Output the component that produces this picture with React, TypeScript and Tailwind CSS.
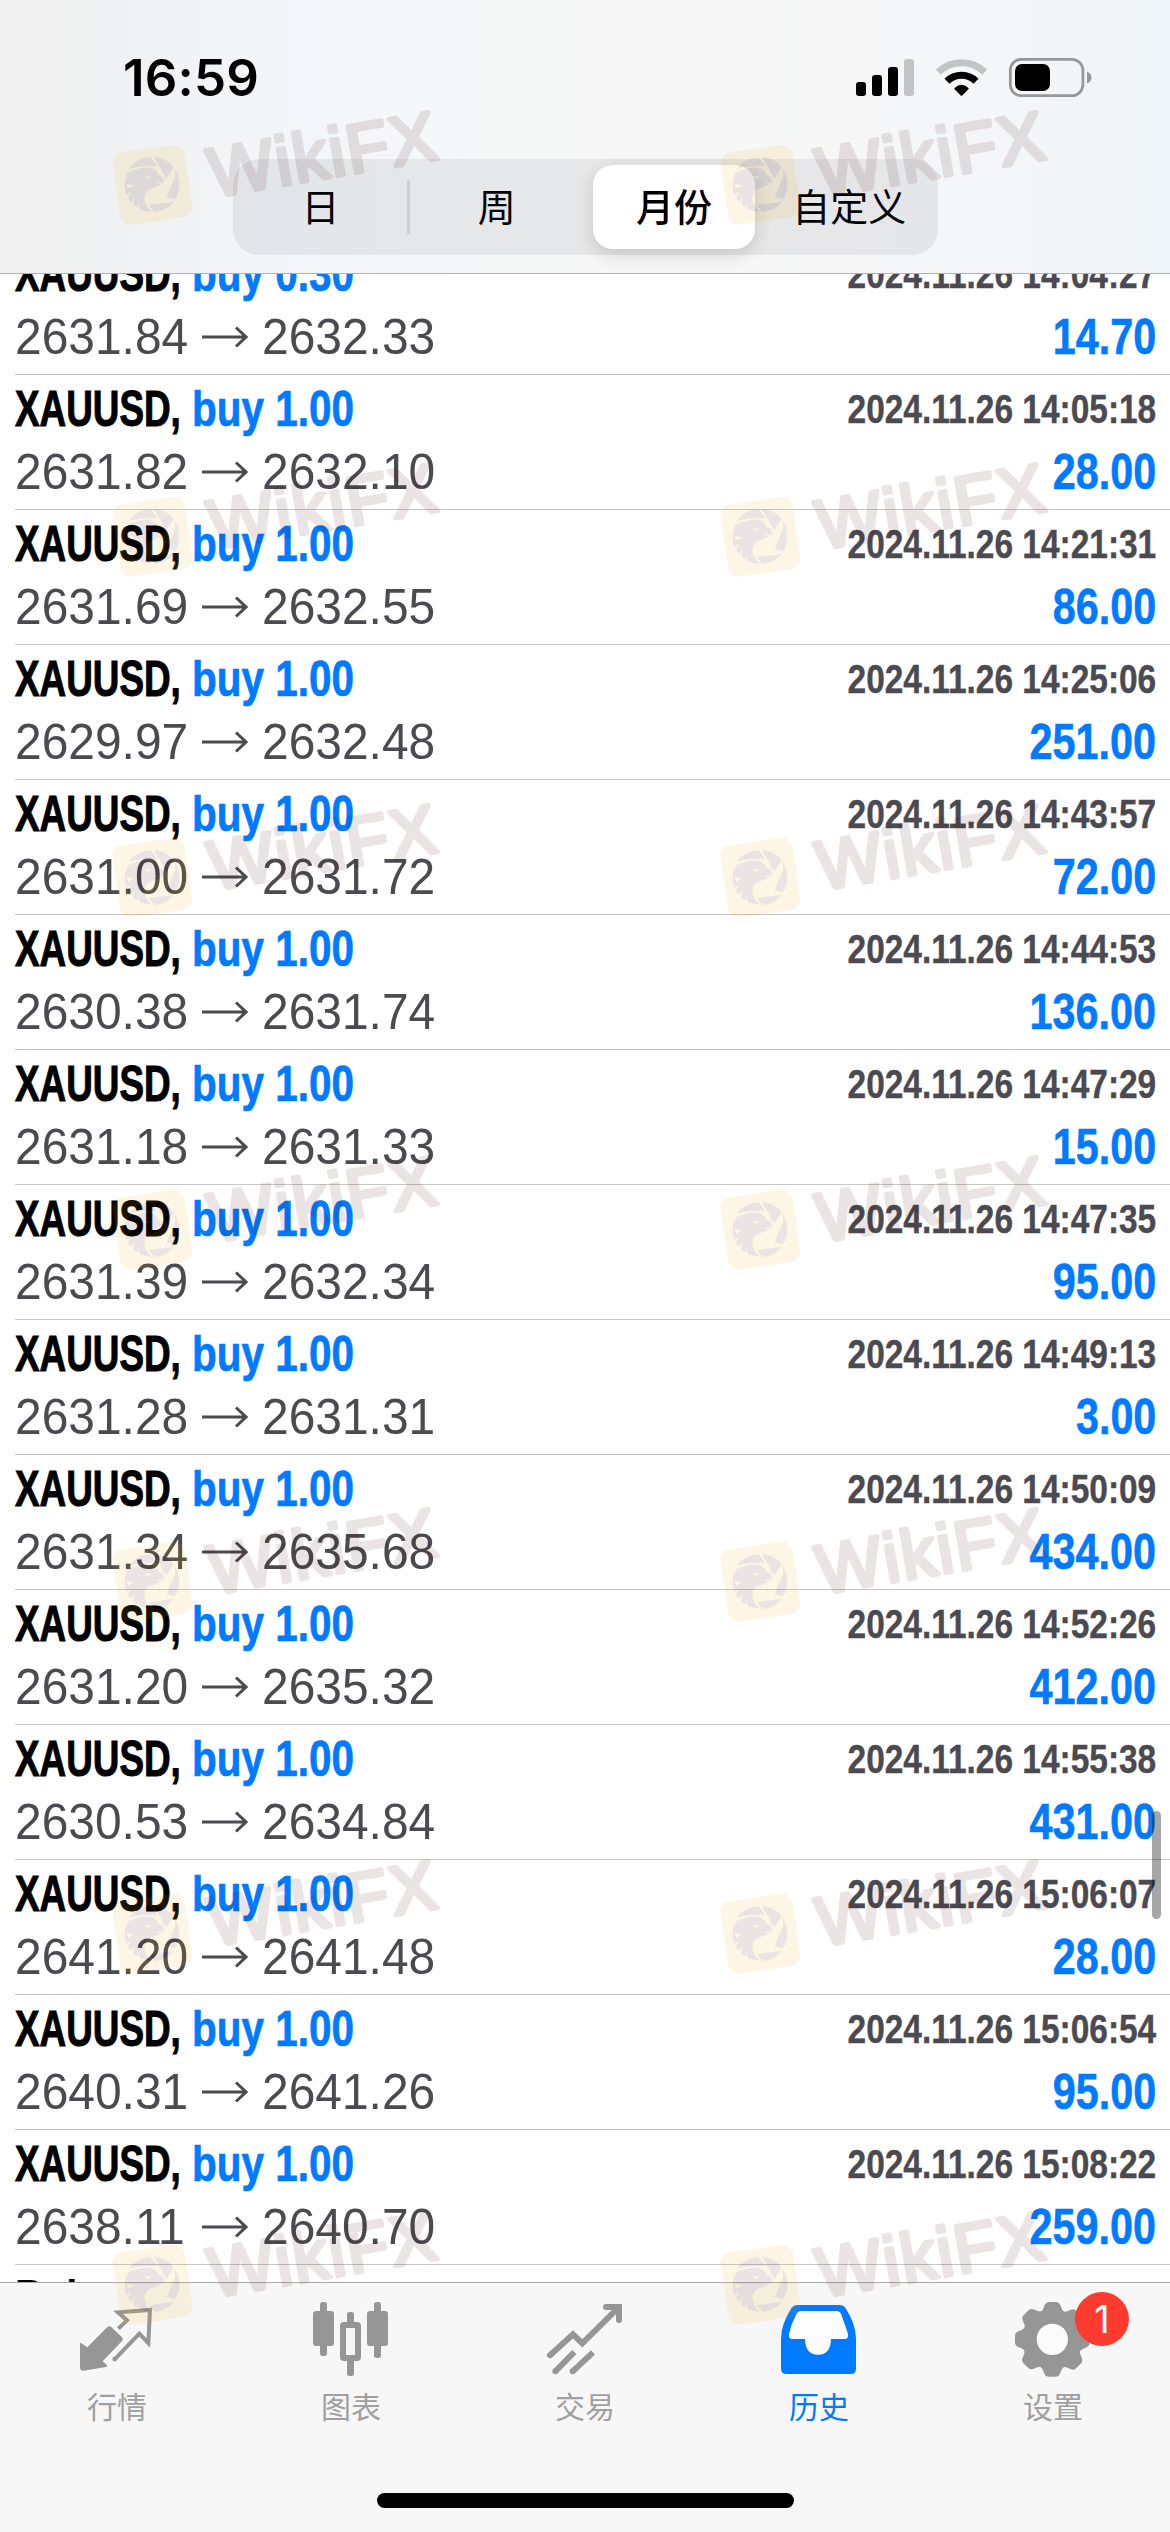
import type { ReactNode } from "react";
import clsx from "clsx";

type Deal = {
  volume: string;
  open: string;
  close: string;
  time: string;
  profit: string;
};

const deals: Deal[] = [
  { volume: "0.30", open: "2631.84", close: "2632.33", time: "2024.11.26 14:04:27", profit: "14.70" },
  { volume: "1.00", open: "2631.82", close: "2632.10", time: "2024.11.26 14:05:18", profit: "28.00" },
  { volume: "1.00", open: "2631.69", close: "2632.55", time: "2024.11.26 14:21:31", profit: "86.00" },
  { volume: "1.00", open: "2629.97", close: "2632.48", time: "2024.11.26 14:25:06", profit: "251.00" },
  { volume: "1.00", open: "2631.00", close: "2631.72", time: "2024.11.26 14:43:57", profit: "72.00" },
  { volume: "1.00", open: "2630.38", close: "2631.74", time: "2024.11.26 14:44:53", profit: "136.00" },
  { volume: "1.00", open: "2631.18", close: "2631.33", time: "2024.11.26 14:47:29", profit: "15.00" },
  { volume: "1.00", open: "2631.39", close: "2632.34", time: "2024.11.26 14:47:35", profit: "95.00" },
  { volume: "1.00", open: "2631.28", close: "2631.31", time: "2024.11.26 14:49:13", profit: "3.00" },
  { volume: "1.00", open: "2631.34", close: "2635.68", time: "2024.11.26 14:50:09", profit: "434.00" },
  { volume: "1.00", open: "2631.20", close: "2635.32", time: "2024.11.26 14:52:26", profit: "412.00" },
  { volume: "1.00", open: "2630.53", close: "2634.84", time: "2024.11.26 14:55:38", profit: "431.00" },
  { volume: "1.00", open: "2641.20", close: "2641.48", time: "2024.11.26 15:06:07", profit: "28.00" },
  { volume: "1.00", open: "2640.31", close: "2641.26", time: "2024.11.26 15:06:54", profit: "95.00" },
  { volume: "1.00", open: "2638.11", close: "2640.70", time: "2024.11.26 15:08:22", profit: "259.00" },
];

const periods = ["日", "周", "月份", "自定义"];

function StatusIcons() {
  return (
    <svg width="240" height="44" viewBox="852 55 240 44" className="absolute left-[852px] top-[55px]">
      <rect x="856" y="82" width="10" height="14" rx="3" />
      <rect x="872" y="75" width="10" height="21" rx="3" />
      <rect x="888" y="67" width="10" height="29" rx="3" />
      <rect x="904" y="59" width="10" height="37" rx="3" fill="#c4c4c4" />
      <g fill="none" strokeWidth="7.2">
        <path d="M938.3 72.2A33.2 33.2 0 0 1 984.7 72.2" stroke="#c4c4c4" />
        <path d="M947 81.2A20.7 20.7 0 0 1 976 81.2" stroke="#000" />
      </g>
      <path d="M954.6 87.9Q961.5 81.4 968.4 87.9Q969 88.6 968.4 89.2L962.2 95.5Q961.5 96.2 960.8 95.5L954.6 89.2Q954 88.6 954.6 87.9Z" />
      <rect x="1010.3" y="59.3" width="72.6" height="36.4" rx="11" fill="none" stroke="#979797" strokeWidth="2.7" />
      <rect x="1015" y="64" width="35" height="27" rx="7" />
      <path d="M1087 71.5Q1091.5 73.5 1091.5 77.5T1087 83.5Z" fill="#979797" />
    </svg>
  );
}

function PeriodPicker() {
  return (
    <div className="relative grid h-[96px] w-[705px] grid-cols-4 rounded-[26px] bg-[#76768020]">
      <span className="absolute left-[174px] top-[21px] h-[54px] w-[3px] rounded-full bg-[#cfcfd1]" />
      {periods.map((period) => (
        <div
          key={period}
          className={clsx(
            "flex items-center justify-center pt-[2px] text-[38px] leading-none",
            period === "月份" &&
              "my-[6px] mr-[6px] ml-[8px] rounded-[20px] bg-white font-medium shadow-[0_6px_18px_rgba(0,0,0,0.14)]",
          )}
        >
          {period}
        </div>
      ))}
    </div>
  );
}

function DealRow({ deal }: { deal: Deal }) {
  return (
    <div className="ml-[15px] flex h-[135px] shrink-0 justify-between border-b border-[#c6c6c8] leading-none">
      <div className="pt-[9px]">
        <div className="flex h-[48px] text-[50px] font-bold whitespace-nowrap">
          <span className="w-[177px]">
            <span className="inline-block origin-left scale-x-[0.737] [-webkit-text-stroke:1px]">XAUUSD,</span>
          </span>
          <span className="inline-block origin-left scale-x-[0.81] text-[#007aff] [-webkit-text-stroke:0.7px]">
            buy {deal.volume}
          </span>
        </div>
        <div className="mt-[16px] flex h-[48px] items-center text-[49.5px] text-[#4b4a50]">
          <span className="w-[187px]">
            <span className="inline-block origin-left scale-x-[0.968]">{deal.open}</span>
          </span>
          <svg width="46" height="22" viewBox="0 0 46 22" fill="none" stroke="currentColor" strokeWidth="3">
            <path d="M0 11H44M34 1.5L44 11L34 20.5" />
          </svg>
          <span className="ml-[14px] inline-block origin-left scale-x-[0.968]">{deal.close}</span>
        </div>
      </div>
      <div className="flex flex-col items-end pt-[14px] pr-[14px] font-bold whitespace-nowrap">
        <span className="h-[39px] origin-right scale-x-[0.836] text-[40px] text-[#4b4a50] [-webkit-text-stroke:0.4px]">
          {deal.time}
        </span>
        <span className="mt-[19px] h-[48px] origin-right scale-x-[0.826] text-[50px] text-[#007aff] [-webkit-text-stroke:0.6px]">
          {deal.profit}
        </span>
      </div>
    </div>
  );
}

function QuotesIcon() {
  return (
    <svg width="234" height="90" viewBox="0 159 702 270">
      <path
        d="M244 340L262 352L322 291Q328 286 334 291L366 322Q371 328 366 333L308 394L320 405Q324 409 318 411L250 422Q240 423 240 412V343Q240 336 244 340Z"
        fill="#969696"
      />
      <path d="M355 296L381 271L354 247L450 240L445 339L418 311L344 388Q340 386 338 386" fill="none" stroke="#969696" strokeWidth="12" />
    </svg>
  );
}

function ChartIcon() {
  return (
    <svg width="234" height="90" viewBox="702 159 702 270" fill="#969696" overflow="visible">
      <rect x="960" y="216" width="21" height="162" rx="8" />
      <rect x="939" y="243" width="63" height="105" rx="9" />
      <rect x="1122" y="216" width="21" height="168" rx="8" />
      <rect x="1101" y="243" width="63" height="105" rx="9" />
      <rect x="1041" y="246" width="21" height="38" rx="8" />
      <rect x="1041" y="384" width="21" height="54" rx="8" />
      <rect x="1029" y="285" width="45" height="99" rx="3" fill="none" stroke="#969696" strokeWidth="18" />
    </svg>
  );
}

function TradeIcon() {
  return (
    <svg width="234" height="90" viewBox="204 159 702 270" fill="none" stroke="#969696" strokeWidth="18" overflow="visible">
      <path d="M450 376L519 313L547 340L656 232" strokeLinecap="round" />
      <path d="M618 231H657V270" strokeLinecap="round" />
      <path d="M466 424L523 366M518 424L579 367" />
      <path d="M466 424h.1M518 424h.1" strokeLinecap="round" />
    </svg>
  );
}

function HistoryIcon() {
  return (
    <svg width="234" height="90" viewBox="-204 159 702 270" overflow="visible">
      <path
        d="M84 225H208Q220 225 227 235Q258 284 258 326V416Q258 432 242 432H49Q33 432 33 416V326Q33 284 64 235Q71 225 84 225Z"
        fill="#007aff"
      />
      <path
        d="M94 243Q84 243 79 253Q64 280 57 313Q55 327 67 327H105Q106 374 144 374Q182 374 183 327H224Q236 327 234 313C230 295 222 277 214 254Q210 243 200 243Z"
        fill="#fdfdfd"
      />
    </svg>
  );
}

const toothAngles = [0, 45, 90, 135, 180, 225, 270, 315];

function SettingsIcon() {
  return (
    <svg width="234" height="90" viewBox="498 159 702 270" fill="#969696" overflow="visible">
      <circle cx="847" cy="328" r="90" />
      {toothAngles.map((angle) => (
        <path
          key={angle}
          d="M812 246Q820 240 823 228Q827 216 838 216H858Q868 216 872 228Q875 240 883 246L880 262H814Z"
          transform={`rotate(${angle} 847 328)`}
        />
      ))}
      <circle cx="847" cy="328" r="47" fill="#fbfbfb" />
    </svg>
  );
}

function Tab({ label, icon, active, badge }: { label: string; icon: ReactNode; active?: boolean; badge?: string }) {
  return (
    <div className="relative flex w-[234px] flex-col items-center">
      {icon}
      <span className={clsx("mt-[20px] text-[30px] leading-none", active ? "text-[#007aff]" : "text-[#a0a0a0]")}>
        {label}
      </span>
      {badge && (
        <span className="absolute left-[139px] top-[9px] flex size-[54px] items-center justify-center rounded-full bg-[#ff3b30] font-[Inter] text-[38px] leading-none text-white">
          {badge}
        </span>
      )}
    </div>
  );
}

function Watermark() {
  return (
    <svg width="360" height="122" viewBox="0 0 1080 366" opacity="0.1" overflow="visible">
      <rect x="12.5" y="115" width="218" height="218" rx="32" fill="#f5b000" transform="rotate(-8.5 121.5 224)" />
      <g fill="#3c0800">
        <path d="M50 177A82 82 0 0 1 116 142L136 169Q92 164 50 177Z" />
        <path d="M126 141A82 82 0 0 1 185 171L163 206Z" />
        <path d="M188 177A82 82 0 0 1 189 268L172 263L164 262L190 199Z" />
        <path d="M120 284L185 276A82 82 0 0 1 128 306L112 287Z" />
        <path d="M39 238Q35 205 50 186Q90 168 118 174Q136 181 140 195Q156 198 157 216Q154 221 152 219Q144 216 132 219L150 223L138 228L124 233Q100 238 97 260Q96 284 118 305Q99 305 82 296L80 280L75 292L64 284L68 262L58 277Q50 268 48 262L60 244L43 255Q40 248 39 238Z" />
      </g>
      <path d="M98 197L118 201Q112 208 103 205ZM44 222L68 226L48 236Z" fill="#f5b000" />
      <text
        x="302"
        y="254"
        transform="rotate(-9.7 350 254)"
        textLength="690"
        lengthAdjust="spacing"
        fill="#3c0800"
        stroke="#3c0800"
        strokeWidth="13"
        strokeLinejoin="round"
        className="font-['Liberation_Sans'] text-[208px]"
      >
        WikiFX
      </text>
    </svg>
  );
}

const watermarkRows = [
  "top-[110px]",
  "top-[462px]",
  "top-[803px]",
  "top-[1155px]",
  "top-[1507px]",
  "top-[1859px]",
  "top-[2210px]",
];

export default function App() {
  return (
    <div className="relative flex h-[2532px] w-[1170px] flex-col overflow-hidden bg-white font-['Liberation_Sans','Noto_Sans_CJK_SC',sans-serif] text-black">
      <header className="flex h-[274px] shrink-0 flex-col items-center border-b border-[#b0b0b2] bg-[linear-gradient(90deg,#f0f0f0_0%,#f1f2f3_14%,#f3f6fa_26%,#f6f7f8_40%,#f7f7f7_50%,#f7f7f7_66%,#f5f6f8_82%,#f0f5f9_100%)]">
        <div className="h-[159px] w-full pl-[123px] pt-[52px]">
          <span className="font-[Inter] text-[51px] leading-[52px] font-semibold tracking-[0.2px]">16:59</span>
          <StatusIcons />
        </div>
        <PeriodPicker />
      </header>

      <main className="h-[2008px] shrink-0 overflow-hidden">
        <div className="-mt-[34px] flex flex-col">
          {deals.map((deal) => (
            <DealRow key={deal.time} deal={deal} />
          ))}
          <div className="ml-[15px] h-[135px] shrink-0 pt-[8px] text-[50px] leading-none font-bold">
            <span className="inline-block origin-left scale-x-[0.8]">Balance</span>
          </div>
        </div>
      </main>

      <nav className="flex h-[250px] shrink-0 flex-col items-center border-t border-[#acacae] bg-[#f7f7f7]">
        <div className="flex h-[210px]">
          <Tab label="行情" icon={<QuotesIcon />} />
          <Tab label="图表" icon={<ChartIcon />} />
          <Tab label="交易" icon={<TradeIcon />} />
          <Tab label="历史" icon={<HistoryIcon />} active />
          <Tab label="设置" icon={<SettingsIcon />} badge="1" />
        </div>
        <div className="h-[15px] w-[417px] rounded-full bg-black" />
      </nav>

      <div className="absolute left-[1152px] top-[1811px] h-[108px] w-[9px] rounded-full bg-black/35" />

      {watermarkRows.map((top) => (
        <div key={top} className={clsx("pointer-events-none absolute left-[112px] flex gap-[248px]", top)}>
          <Watermark />
          <Watermark />
        </div>
      ))}
    </div>
  );
}
